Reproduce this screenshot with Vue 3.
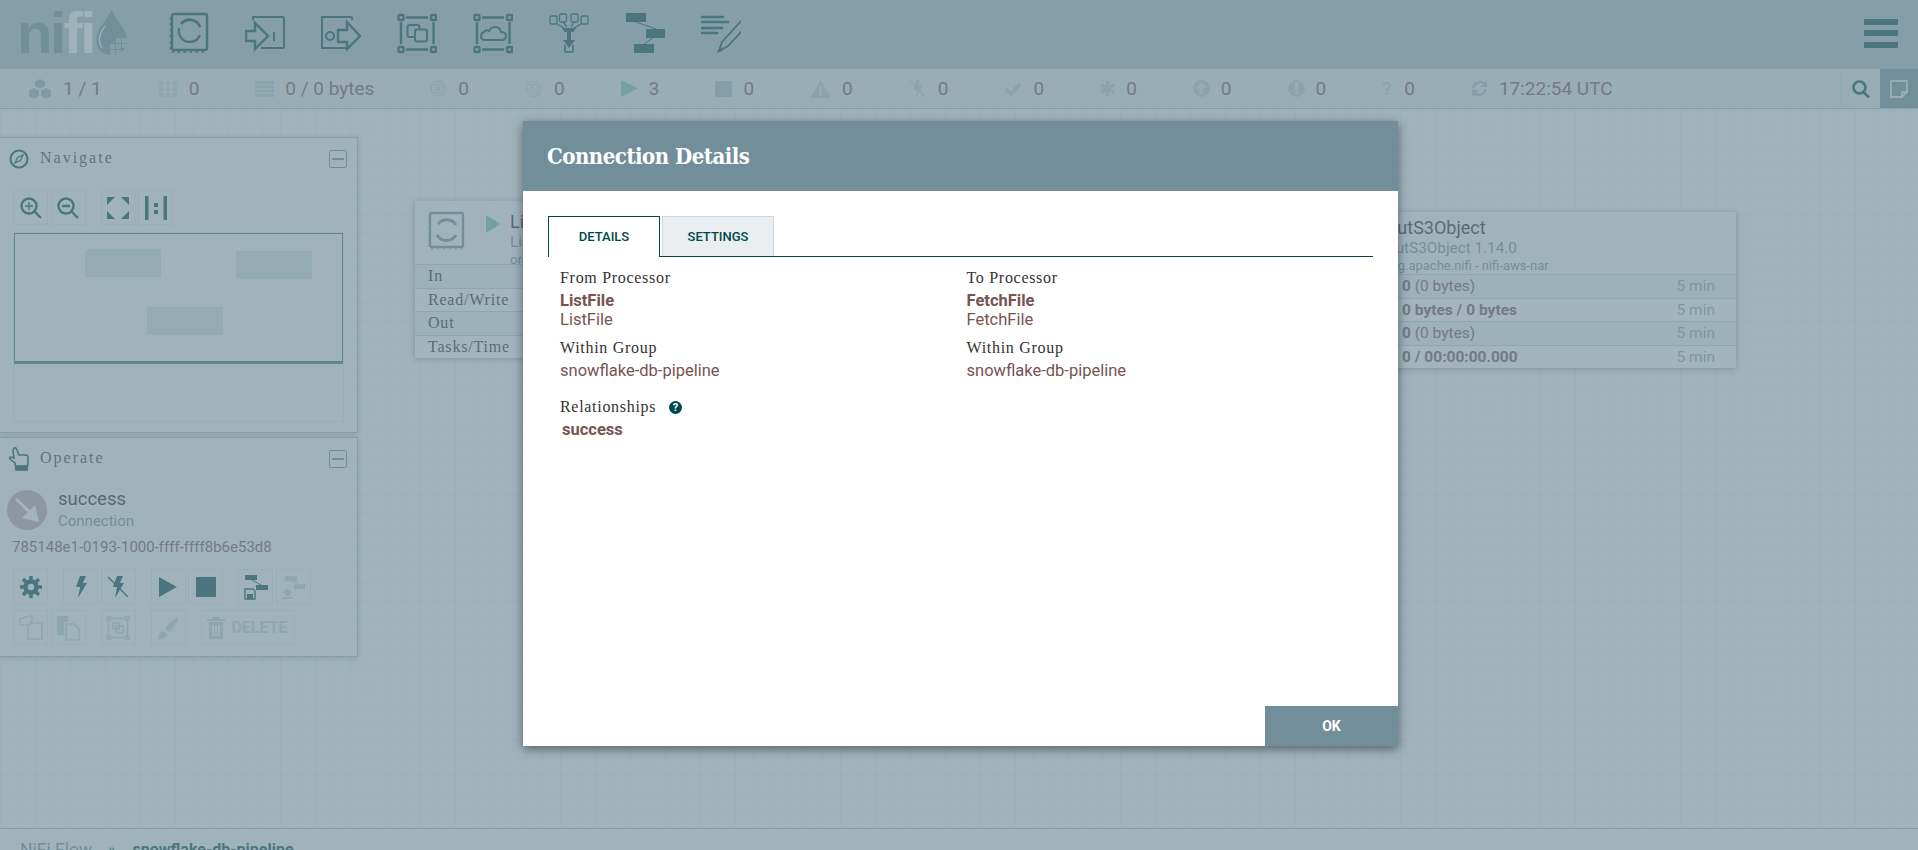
<script setup>
const rows = ["In", "Read/Write", "Out", "Tasks/Time"];

const putRows = [
	{ strong: "0", rest: " (0 bytes)" },
	{ strong: "0 bytes / 0 bytes", rest: "" },
	{ strong: "0", rest: " (0 bytes)" },
	{ strong: "0 / 00:00:00.000", rest: "" },
];

const details = [
	{ label: "From Processor", name: "ListFile", type: "ListFile" },
	{ label: "To Processor", name: "FetchFile", type: "FetchFile" },
];
</script>

<template>
	<div class="page">
		<header class="topbar">
			<div class="logo">
				<span class="logo-text">ni<em>fi</em></span>
				<svg class="drop" width="32" height="47" viewBox="0 0 32 47">
					<path d="M15.500 0C18 10 31 19 31 31C31 40 24 46 15.500 46C7 46 0 40 0 31C0 19 13 10 15.500 0Z" fill="#728e9b" />
					<path d="M9 17C3 25 1 32 6 39" fill="none" stroke="#fff" stroke-width="1.2" />
					<g fill="#aabbc3">
						<rect x="20" y="29" width="5" height="5" /><rect x="26" y="29" width="5" height="5" />
						<rect x="14" y="35" width="5" height="5" /><rect x="20" y="35" width="5" height="5" /><rect x="26" y="35" width="5" height="4" />
						<rect x="14" y="41" width="5" height="5" /><rect x="20" y="41" width="5" height="4" />
					</g>
				</svg>
			</div>
			<nav class="tools">
				<svg width="40" height="44" viewBox="0 0 40 44" fill="none" stroke="#004849">
					<rect x="3" y="3" width="35" height="36" rx="2" stroke-width="2.4" />
					<path d="M1.500 6V41H38" stroke-width="1.400" stroke-dasharray="2.500 3.500" />
					<path d="M12 13A11 11 0 0 1 31 16" stroke-width="2.800" />
					<path d="M31 24A11 11 0 0 1 11 25A11 11 0 0 1 10 17" stroke-width="2.200" />
				</svg>
				<svg width="40" height="44" viewBox="0 0 40 44" fill="none" stroke="#004849" stroke-width="2">
					<path d="M8 9V6H38Q39 6 39 7V36Q39 37 38 37H16" />
					<path d="M1 20H10V12L23 25L10 38V30H1Z" stroke-width="2.400" />
					<path d="M29 21V30" />
				</svg>
				<svg width="40" height="44" viewBox="0 0 40 44" fill="none" stroke="#004849" stroke-width="2">
					<path d="M31 9V7Q31 6 30 6H1V37H26" />
					<path d="M17 19H26V11L39 25L26 38V31H17Z" stroke-width="2.400" />
					<circle cx="9" cy="25" r="4" />
				</svg>
				<svg width="40" height="44" viewBox="0 0 40 44" fill="none" stroke="#004849" stroke-width="2">
					<rect x="1.500" y="4" width="5" height="5" stroke-width="2.400" rx="1" /><rect x="34" y="4" width="5" height="5" stroke-width="2.400" rx="1" />
					<rect x="1.500" y="36" width="5" height="5" stroke-width="2.400" rx="1" /><rect x="34" y="36" width="5" height="5" stroke-width="2.400" rx="1" />
					<path d="M9 6.500H31M9 38.500H31M4 11V33M36.500 11V33" stroke-width="2.400" />
					<rect x="10.500" y="14" width="12" height="12" rx="2" />
					<rect x="18" y="18.500" width="12" height="12" rx="2" fill="#aabbc3" />
				</svg>
				<svg width="40" height="44" viewBox="0 0 40 44" fill="none" stroke="#004849" stroke-width="2">
					<rect x="1.500" y="4" width="5" height="5" stroke-width="2.400" rx="1" /><rect x="34" y="4" width="5" height="5" stroke-width="2.400" rx="1" />
					<rect x="1.500" y="36" width="5" height="5" stroke-width="2.400" rx="1" /><rect x="34" y="36" width="5" height="5" stroke-width="2.400" rx="1" />
					<path d="M9 6.500H31M9 38.500H31M4 11V33M36.500 11V33" stroke-width="2.400" />
					<path d="M12 29H28Q33 29 33 25Q33 21 28 21Q27 16 22 16Q18 16 16 20Q13 18 11 21Q8 22 8 25Q8 29 12 29Z" />
				</svg>
				<svg width="40" height="44" viewBox="0 0 40 44" fill="none" stroke="#004849">
					<g stroke-width="1.300">
						<rect x="1" y="5" width="7" height="8" rx="1.500" /><rect x="10.500" y="3" width="7" height="8" rx="1.500" />
						<rect x="22" y="3" width="7" height="8" rx="1.500" /><rect x="32" y="5" width="7" height="8" rx="1.500" />
						<path d="M8 13L15 17M14 11L18 16M25 11L22 16M32 13L25 17" />
					</g>
					<path d="M13 17H27L24.500 21H15.500Z" fill="#004849" stroke="none" />
					<path d="M20 21V30" stroke-width="4" />
					<path d="M14 29H26L20 37Z" fill="#004849" stroke="none" />
					<path d="M16 34V40Q16 41 17 41H23Q24 41 24 40V34" stroke-width="1.600" />
				</svg>
				<svg width="40" height="44" viewBox="0 0 40 44" fill="#004849">
					<rect x="1" y="2" width="20" height="9" /><rect x="21" y="18" width="19" height="9" /><rect x="9" y="33" width="20" height="9" />
					<path d="M11 11L31 18M28 27L19 33" stroke="#004849" fill="none" />
				</svg>
				<svg width="40" height="44" viewBox="0 0 40 44" fill="none" stroke="#004849">
					<path d="M1 6H22M1 11H27M1 17H21M1 22H16" stroke-width="2.600" stroke-linecap="round" />
					<path d="M41 9L21 31L18 40L27 35L41 20" stroke-width="1.800" />
					<path d="M19 36L17 41L22 39Z" fill="#004849" />
				</svg>
			</nav>
			<div class="hamburger"><i></i><i></i><i></i></div>
		</header>

		<div class="statusbar">
			<div class="stats">
				<div class="stat">
					<svg width="24" height="20" viewBox="0 0 24 20" fill="#9db0ba">
						<path d="M12 0L17 2.500V7L12 9.500L7 7V2.500Z" /><path d="M6 9L11 11.500V17L6 20L1 17V11.500Z" /><path d="M18 9L23 11.500V17L18 20L13 17V11.500Z" />
					</svg>
					<span>1 / 1</span>
				</div>
				<div class="stat">
					<svg width="20" height="18" viewBox="0 0 20 18" fill="#c5d2d8">
						<ellipse cx="3.500" cy="3" rx="2.500" ry="2.600" /><ellipse cx="10" cy="3" rx="2.500" ry="2.600" /><ellipse cx="16.500" cy="3" rx="2.500" ry="2.600" />
						<ellipse cx="3.500" cy="9" rx="2.500" ry="2.600" /><ellipse cx="10" cy="9" rx="2.500" ry="2.600" /><ellipse cx="16.500" cy="9" rx="2.500" ry="2.600" />
						<ellipse cx="3.500" cy="15" rx="2.500" ry="2.600" /><ellipse cx="10" cy="15" rx="2.500" ry="2.600" /><ellipse cx="16.500" cy="15" rx="2.500" ry="2.600" />
					</svg>
					<span>0</span>
				</div>
				<div class="stat">
					<svg width="19" height="16" viewBox="0 0 19 16" fill="#bdcbd1">
						<rect width="19" height="3" /><rect y="4.300" width="19" height="3" /><rect y="8.600" width="19" height="3" /><rect y="13" width="19" height="3" />
					</svg>
					<span>0 / 0 bytes</span>
				</div>
				<div class="stat">
					<svg width="17" height="17" viewBox="0 0 17 17" fill="none" stroke="#bdcbd1" stroke-width="1.500">
						<circle cx="8.500" cy="8.500" r="7.500" /><circle cx="8.500" cy="8.500" r="4.500" /><circle cx="8.500" cy="8.500" r="1.500" fill="#bdcbd1" />
					</svg>
					<span>0</span>
				</div>
				<div class="stat">
					<svg width="18" height="18" viewBox="0 0 18 18" fill="none" stroke="#c5d2d8" stroke-width="1.500">
						<circle cx="9" cy="9" r="7.500" /><circle cx="9" cy="9" r="4.500" /><path d="M2 1L16 17" />
					</svg>
					<span>0</span>
				</div>
				<div class="stat">
					<svg width="17" height="17" viewBox="0 0 17 17"><path d="M0 0L17 8.500L0 17Z" fill="#7dc7a0" /></svg>
					<span>3</span>
				</div>
				<div class="stat">
					<svg width="17" height="16" viewBox="0 0 17 16"><rect width="17" height="16" fill="#aabbc3" /></svg>
					<span>0</span>
				</div>
				<div class="stat">
					<svg width="21" height="18" viewBox="0 0 21 18">
						<path d="M10.500 0L21 18H0Z" fill="#bdcbd1" /><path d="M10.500 6V12M10.500 13.500V16" stroke="#e3e8eb" stroke-width="2" />
					</svg>
					<span>0</span>
				</div>
				<div class="stat">
					<svg width="18" height="18" viewBox="0 0 18 18">
						<path d="M7 0H11L9.500 6H13L7 18L8 10H4.500Z" fill="#bdcbd1" /><path d="M2 1L16 17" stroke="#bdcbd1" stroke-width="1.400" />
					</svg>
					<span>0</span>
				</div>
				<div class="stat">
					<svg width="18" height="14" viewBox="0 0 18 14" fill="none"><path d="M2 7L7 12L16 2" stroke="#bdcbd1" stroke-width="4" /></svg>
					<span>0</span>
				</div>
				<div class="stat">
					<svg width="15" height="15" viewBox="0 0 15 15" fill="none" stroke="#bdcbd1" stroke-width="3.500">
						<path d="M7.500 0V15M1 3.500L14 11.500M14 3.500L1 11.500" />
					</svg>
					<span>0</span>
				</div>
				<div class="stat">
					<svg width="17" height="17" viewBox="0 0 17 17">
						<circle cx="8.500" cy="8.500" r="8.500" fill="#bdcbd1" /><path d="M8.500 14V5M4.500 8L8.500 4L12.500 8" stroke="#e3e8eb" stroke-width="2" fill="none" />
					</svg>
					<span>0</span>
				</div>
				<div class="stat">
					<svg width="17" height="17" viewBox="0 0 17 17">
						<circle cx="8.500" cy="8.500" r="8.500" fill="#bdcbd1" /><path d="M8.500 3V10M8.500 11.500V14" stroke="#e3e8eb" stroke-width="3" />
					</svg>
					<span>0</span>
				</div>
				<div class="stat">
					<b class="qmark">?</b>
					<span>0</span>
				</div>
				<div class="stat">
					<svg width="17" height="17" viewBox="0 0 17 17" fill="none" stroke="#aabbc3" stroke-width="2.500">
						<path d="M2 8C3 3 9 0 14 4M15 9C14 14 8 17 3 13" />
						<path d="M16 0V7H9ZM1 17V10H8Z" fill="#aabbc3" stroke="none" />
					</svg>
					<span>17:22:54 UTC</span>
				</div>
			</div>
			<div class="search-btn">
				<svg width="18" height="18" viewBox="0 0 18 18" fill="none" stroke="#004849" stroke-width="2.600">
					<circle cx="7.500" cy="7.500" r="6" /><path d="M11.500 12L17 17.500" />
				</svg>
			</div>
			<div class="note-btn">
				<svg width="18" height="18" viewBox="0 0 18 18" fill="none" stroke="#fff" stroke-width="1.500">
					<path d="M1 1H17V12L12 17H1ZM17 12H12V17" />
				</svg>
			</div>
		</div>

		<main class="canvas">
			<div class="node list-node">
				<div class="node-head">
					<svg width="38" height="40" viewBox="0 0 38 40" fill="none" stroke="#728e9b">
						<rect x="2" y="2" width="33" height="34" rx="2" stroke-width="2.400" />
						<path d="M1 4V38H36" stroke-dasharray="2 4" />
						<path d="M10 13A11 11 0 0 1 28 14M28 24A11 11 0 0 1 9 24" stroke-width="3" />
					</svg>
					<svg class="node-play" width="15" height="18" viewBox="0 0 15 18"><path d="M0 0L15 9L0 18Z" fill="#7dc7a0" /></svg>
					<div>
						<div class="node-name">ListFile</div>
						<div class="node-type">ListFile 1.14.0</div>
						<div class="node-bundle">org.apache.nifi - nifi-standard-nar</div>
					</div>
				</div>
				<div v-for="row in rows" :key="row" class="node-row">
					<span class="row-label">{{ row }}</span>
				</div>
			</div>

			<div class="node put-node">
				<div class="node-head put-head">
					<div>
						<div class="node-name">PutS3Object</div>
						<div class="node-type">PutS3Object 1.14.0</div>
						<div class="node-bundle">org.apache.nifi - nifi-aws-nar</div>
					</div>
				</div>
				<div v-for="(row, i) in putRows" :key="i" class="node-row put-row">
					<span class="row-value"><b>{{ row.strong }}</b>{{ row.rest }}</span>
					<span class="row-time">5 min</span>
				</div>
			</div>

			<aside class="palettes">
				<section class="panel nav-panel">
					<div class="panel-title">
						<svg width="20" height="20" viewBox="0 0 20 20" fill="none" stroke="#004849">
							<circle cx="10" cy="10" r="8.500" stroke-width="2.200" />
							<path d="M14 6L11.500 11.500L6 14L8.500 8.500Z" stroke-width="1.300" />
						</svg>
						<h2>Navigate</h2>
						<span class="collapse"></span>
					</div>
					<div class="btn-row">
						<button class="tool">
							<svg width="22" height="22" viewBox="0 0 22 22" fill="none" stroke="#004849" stroke-width="2.400">
								<circle cx="9" cy="9" r="7.500" /><path d="M14.500 14.500L21 21" /><path d="M5 9H13M9 5V13" stroke-width="1.400" />
							</svg>
						</button>
						<button class="tool">
							<svg width="22" height="22" viewBox="0 0 22 22" fill="none" stroke="#004849" stroke-width="2.400">
								<circle cx="9" cy="9" r="7.500" /><path d="M14.500 14.500L21 21M5 9H13" />
							</svg>
						</button>
						<button class="tool sep">
							<svg width="24" height="24" viewBox="0 0 24 24" fill="#004849">
								<path d="M1 1H9L1 9ZM23 1V9L15 1ZM1 23V15L9 23ZM23 23H15L23 15Z" />
							</svg>
						</button>
						<button class="tool">
							<svg width="24" height="24" viewBox="0 0 24 24" fill="#004849">
								<rect x="1" width="3.500" height="24" /><rect x="19.500" width="3.500" height="24" />
								<rect x="10" y="7" width="4" height="4" /><rect x="10" y="14" width="4" height="4" />
							</svg>
						</button>
					</div>
					<div class="birdseye-wrap">
						<div class="birdseye">
							<i class="mini m1"></i><i class="mini m2"></i><i class="mini m3"></i>
						</div>
					</div>
				</section>

				<section class="panel op-panel">
					<div class="panel-title">
						<svg width="20" height="24" viewBox="0 0 20 24" fill="none" stroke="#004849" stroke-width="1.600">
							<path d="M5 1Q7 0 8 3L10 8H17Q19 8 19 11V16L18 22H7L6 16L1 12Q0 10 2 10L5 11L4 4Q4 2 5 1Z" />
							<rect x="7" y="19" width="11" height="4" fill="#004849" />
						</svg>
						<h2>Operate</h2>
						<span class="collapse"></span>
					</div>
					<div class="selection">
						<div class="conn-icon">
							<svg width="28" height="28" viewBox="0 0 28 28" fill="none">
								<path d="M3 3L20 19" stroke="#fff" stroke-width="3" /><path d="M26 26L9 22L22 9Z" fill="#fff" />
							</svg>
						</div>
						<div>
							<div class="sel-name">success</div>
							<div class="sel-type">Connection</div>
						</div>
					</div>
					<div class="sel-id">785148e1-0193-1000-ffff-ffff8b6e53d8</div>
					<div class="btn-row">
						<button class="tool">
							<svg width="22" height="22" viewBox="0 0 22 22" fill="none" stroke="#004849">
								<circle cx="11" cy="11" r="5.500" stroke-width="4.500" />
								<path d="M11 0V5M11 17V22M0 11H5M17 11H22M3 3L6.500 6.500M15.500 15.500L19 19M3 19L6.500 15.500M15.500 6.500L19 3" stroke-width="3.500" />
							</svg>
						</button>
						<button class="tool sep">
							<svg width="14" height="24" viewBox="0 0 14 24"><path d="M6 1H12L9 8H13L4 23L6 12H2Z" fill="#004849" /></svg>
						</button>
						<button class="tool">
							<svg width="22" height="24" viewBox="0 0 22 24">
								<path d="M10 1H16L13 8H17L8 23L10 12H6Z" fill="#004849" /><path d="M1 2L21 22" stroke="#004849" stroke-width="1.500" />
							</svg>
						</button>
						<button class="tool sep">
							<svg width="20" height="22" viewBox="0 0 20 22"><path d="M1 1L19 11L1 21Z" fill="#004849" /></svg>
						</button>
						<button class="tool">
							<svg width="20" height="20" viewBox="0 0 20 20"><rect width="20" height="20" fill="#004849" /></svg>
						</button>
						<button class="tool sep">
							<svg width="24" height="26" viewBox="0 0 24 26" fill="#004849">
								<rect x="1" y="1" width="12" height="5" /><rect x="12" y="11" width="12" height="5" />
								<path d="M8 6L17 11" stroke="#004849" />
								<path d="M1 15H9L11 17V25H1Z" fill="none" stroke="#004849" stroke-width="1.400" /><rect x="3" y="20" width="6" height="5" />
							</svg>
						</button>
						<button class="tool">
							<svg width="24" height="26" viewBox="0 0 24 26" fill="#c5d2d8">
								<rect x="4" y="2" width="12" height="5" /><rect x="13" y="10" width="11" height="5" />
								<path d="M10 7L18 10" stroke="#c5d2d8" />
								<path d="M5 14L11 19H8V22H3V19H0ZM0 23H10V25H0Z" transform="translate(1 0)" />
							</svg>
						</button>
					</div>
					<div class="btn-row">
						<button class="tool off">
							<svg width="24" height="26" viewBox="0 0 24 26" fill="none" stroke="#c5d2d8" stroke-width="1.600">
								<path d="M9 1H13V6L9 10H1V4Z" /><path d="M13 8H23V24H9V12Z" />
							</svg>
						</button>
						<button class="tool off">
							<svg width="24" height="26" viewBox="0 0 24 26" fill="#c5d2d8">
								<path d="M1 1H12V7H8V20H1Z" /><path d="M10 9H18L23 14V25H10Z" fill="none" stroke="#c5d2d8" stroke-width="1.600" />
							</svg>
						</button>
						<button class="tool off sep">
							<svg width="24" height="26" viewBox="0 0 24 26" fill="none" stroke="#c5d2d8" stroke-width="1.600">
								<rect x="1" y="2" width="3" height="3" /><rect x="20" y="2" width="3" height="3" />
								<rect x="1" y="21" width="3" height="3" /><rect x="20" y="21" width="3" height="3" />
								<path d="M5 3.500H19M5 22.500H19M2.500 6V20M21.500 6V20" />
								<rect x="7" y="8" width="6" height="6" /><rect x="10" y="11" width="7" height="7" />
							</svg>
						</button>
						<button class="tool off sep">
							<svg width="24" height="24" viewBox="0 0 24 24" fill="#c5d2d8">
								<path d="M23 1Q14 4 9 13L12 16Q20 11 23 1ZM7 15Q3 16 3 20Q3 22 1 23Q7 24 10 21Q11 19 10 17Z" />
							</svg>
						</button>
						<button class="tool off sep delete">
							<svg width="18" height="22" viewBox="0 0 18 22" fill="#c5d2d8">
								<path d="M6 0H12V2H18V4H0V2H6ZM2 5H16V22H2ZM5 8V19H7V8ZM8 8V19H10V8ZM11 8V19H13V8Z" fill-rule="evenodd" />
							</svg>
							<span>DELETE</span>
						</button>
					</div>
				</section>
			</aside>
		</main>

		<footer class="breadcrumbs">
			<span class="crumb">NiFi Flow</span>
			<span class="crumb-sep">»</span>
			<b class="crumb-current">snowflake-db-pipeline</b>
		</footer>

		<div class="overlay">
			<div class="dialog">
				<h1 class="dialog-head">Connection Details</h1>
				<div class="dialog-body">
					<div class="tabs">
						<div class="tab active">DETAILS</div>
						<div class="tab">SETTINGS</div>
					</div>
					<div class="columns">
						<div v-for="col in details" :key="col.label" class="column">
							<div class="label">{{ col.label }}</div>
							<div class="value strong">{{ col.name }}</div>
							<div class="value">{{ col.type }}</div>
							<div class="label group-label">Within Group</div>
							<div class="value">snowflake-db-pipeline</div>
						</div>
					</div>
					<div class="relations">
						<div class="label">
							Relationships
							<span class="help">?</span>
						</div>
						<div class="value strong rel-value">success</div>
					</div>
				</div>
				<div class="dialog-foot">
					<button class="ok">OK</button>
				</div>
			</div>
		</div>
	</div>
</template>

<style>
html,
body {
	margin: 0;
	overflow: hidden;
}
</style>

<style scoped>
.page {
	position: relative;
	display: flex;
	flex-direction: column;
	height: 850px;
	overflow: hidden;
	font-family: Roboto, "Liberation Sans", sans-serif;
	background: #f9fafb;
}

.topbar {
	display: flex;
	align-items: center;
	flex-shrink: 0;
	height: 69px;
	background: #aabbc3;
}

.logo {
	display: flex;
	align-items: flex-start;
	width: 169px;
	height: 69px;
	padding-left: 17px;
	box-sizing: border-box;
}

.logo-text {
	width: 79px;
	font-family: "Liberation Sans", sans-serif;
	font-weight: 700;
	font-size: 58px;
	line-height: 60px;
	letter-spacing: -2.500px;
	color: #728e9b;
	margin-top: 3px;
}

.logo-text em {
	font-style: normal;
	color: #f9fafb;
}

.drop {
	margin-top: 9px;
}

.tools {
	display: flex;
	gap: 36px;
	margin-bottom: 3px;
}

.hamburger {
	display: flex;
	flex-direction: column;
	gap: 5.500px;
	margin: 0 20px 3px auto;
}

.hamburger i {
	display: block;
	width: 34px;
	height: 6px;
	border-radius: 1px;
	background: #004849;
}

.statusbar {
	display: flex;
	align-items: center;
	flex-shrink: 0;
	height: 40px;
	background: #e3e8eb;
	border-bottom: 1px solid #aabbc3;
	box-sizing: border-box;
}

.stats {
	display: flex;
	align-items: center;
	gap: 56px;
	flex: 1;
	padding-left: 28px;
}

.stat {
	display: flex;
	align-items: center;
	gap: 11px;
	font-size: 19px;
	color: #775351;
}

.qmark {
	color: #bdcbd1;
	font-size: 19px;
	width: 11px;
}

.search-btn {
	display: flex;
	align-items: center;
	justify-content: center;
	width: 40px;
	height: 39px;
	border-left: 1px solid #d5dde1;
	box-sizing: border-box;
}

.note-btn {
	display: flex;
	align-items: center;
	justify-content: center;
	width: 38px;
	height: 39px;
	background: #728e9b;
}

.canvas {
	position: relative;
	flex-shrink: 0;
	height: 719px;
	background-color: #f9fafb;
	background-image:
		linear-gradient(rgba(0, 72, 73, 0.06) 1px, transparent 1px),
		linear-gradient(90deg, rgba(0, 72, 73, 0.06) 1px, transparent 1px);
	background-size: 17.500px 17.500px;
	background-position: 0 1px;
}

.node {
	position: absolute;
	width: 441px;
	background: #fff;
	box-shadow: 0 1px 6px rgba(0, 0, 0, 0.4);
}

.list-node {
	left: 415px;
	top: 92px;
}

.put-node {
	left: 1295px;
	top: 103px;
}

.node-head {
	display: flex;
	align-items: flex-start;
	height: 63px;
	padding: 10px 0 0 13px;
	box-sizing: border-box;
	background: #f9fafb;
}

.put-head {
	padding: 5px 0 0 91px;
	height: 62px;
}

.node-play {
	margin: 4px 9px 0 20px;
	flex-shrink: 0;
}

.node-name {
	font-size: 18px;
	line-height: 22px;
	color: #262626;
}

.node-type {
	font-size: 15.300px;
	line-height: 19px;
	color: #728e9b;
}

.node-bundle {
	font-size: 13px;
	line-height: 15px;
	color: #728e9b;
}

.node-row {
	display: flex;
	align-items: center;
	justify-content: space-between;
	height: 23.500px;
	padding: 0 21px 0 13px;
	border-top: 1px solid #c7d2d7;
	box-sizing: border-box;
	background: #fff;
}

.node-row:nth-child(even) {
	background: #f0f3f5;
}

.put-row {
	padding-left: 107px;
}

.row-label {
	font-family: "Liberation Serif", serif;
	font-size: 16px;
	color: #262626;
	letter-spacing: 0.800px;
}

.row-value {
	font-size: 15.500px;
	color: #775351;
}

.row-time {
	font-size: 15.500px;
	color: #8fa5af;
}

.palettes {
	position: absolute;
	left: 0;
	top: 28px;
	display: flex;
	flex-direction: column;
	gap: 4px;
	width: 358px;
}

.panel {
	box-sizing: border-box;
	background: #f9fafb;
	border: 1px solid #aabbc3;
	border-left: 0;
	box-shadow: 0 1px 6px rgba(0, 0, 0, 0.25);
}

.nav-panel {
	height: 296px;
}

.op-panel {
	height: 220px;
}

.panel-title {
	display: flex;
	align-items: center;
	height: 41px;
	padding: 0 10px 0 9px;
}

.panel-title h2 {
	margin: -2px 0 0 11px;
	flex: 1;
	font-family: "Liberation Serif", serif;
	font-weight: 400;
	font-size: 16px;
	letter-spacing: 2px;
	color: #3c3c3c;
}

.collapse {
	position: relative;
	width: 16px;
	height: 16px;
	border: 1px solid #728e9b;
	border-radius: 2px;
}

.collapse::after {
	content: "";
	position: absolute;
	left: 2px;
	right: 2px;
	top: 7px;
	height: 2px;
	background: #728e9b;
}

.btn-row {
	display: flex;
	gap: 2.500px;
	padding-left: 13px;
	margin-top: 11px;
}

.op-panel .btn-row {
	margin-top: 6px;
}

.tool {
	display: flex;
	align-items: center;
	justify-content: center;
	width: 35px;
	height: 35px;
	padding: 0;
	background: transparent;
	border: 1px solid #e3e8eb;
}

.sep {
	margin-left: 12.500px;
}

.delete {
	width: 94px;
	gap: 6px;
	font-family: Roboto, sans-serif;
	font-weight: 700;
	font-size: 16px;
	color: #c5d2d8;
}

.birdseye-wrap {
	height: 188px;
	margin: 7px 13px 0;
	border: 1px solid #e3e8eb;
}

.birdseye {
	position: relative;
	height: 131px;
	border: 1px solid rgba(0, 72, 73, 0.75);
	border-bottom-width: 3px;
	box-sizing: border-box;
}

.mini {
	position: absolute;
	width: 76px;
	height: 28px;
	background: #d8e0e4;
}

.m1 {
	left: 70px;
	top: 15px;
}

.m2 {
	left: 221px;
	top: 17px;
}

.m3 {
	left: 132px;
	top: 73px;
}

.selection {
	display: flex;
	align-items: center;
	gap: 11px;
	padding: 9px 0 0 7px;
}

.conn-icon {
	display: flex;
	align-items: center;
	justify-content: center;
	width: 40px;
	height: 40px;
	border-radius: 50%;
	background: #c0a8ac;
}

.sel-name {
	font-size: 18.500px;
	line-height: 23px;
	color: #262626;
}

.sel-type {
	font-size: 15px;
	line-height: 20px;
	color: #728e9b;
}

.sel-id {
	padding: 8px 0 0 12px;
	font-size: 15px;
	line-height: 17px;
	color: #775351;
}

.sel-id + .btn-row {
	margin-top: 13px;
}

.breadcrumbs {
	display: flex;
	align-items: flex-start;
	gap: 16px;
	flex: 1;
	padding: 12px 0 0 20px;
	border-top: 1px solid #aabbc3;
	box-sizing: border-box;
	font-size: 16px;
	line-height: 18px;
	background: #f9fafb;
	color: #728e9b;
}

.crumb {
	font-size: 17.500px;
}

.crumb-sep {
	color: #004849;
}

.crumb-current {
	margin-left: 1px;
	color: #004849;
}

.overlay {
	position: absolute;
	inset: 0;
	background: rgba(114, 142, 155, 0.66);
}

.dialog {
	position: absolute;
	left: 523px;
	top: 121px;
	display: flex;
	flex-direction: column;
	width: 875px;
	height: 625px;
	background: #fff;
	box-shadow: 0 3px 10px rgba(0, 0, 0, 0.45);
}

.dialog-head {
	margin: 0;
	height: 70px;
	padding-left: 24px;
	flex-shrink: 0;
	box-sizing: border-box;
	background: #728e9b;
	color: #fff;
	font-family: "DejaVu Serif", serif;
	font-stretch: condensed;
	font-weight: 700;
	font-size: 22px;
	letter-spacing: -0.500px;
	line-height: 70px;
}

.dialog-body {
	flex: 1;
	padding: 25px 25px 0 25px;
}

.tabs {
	display: flex;
	gap: 2px;
	height: 41px;
	border-bottom: 1px solid #004849;
	box-sizing: border-box;
}

.tab {
	width: 112px;
	height: 40px;
	line-height: 40px;
	text-align: center;
	box-sizing: border-box;
	font-size: 13px;
	font-weight: 500;
	color: #004849;
	background: #eaeef0;
	border: 1px solid #cfd8dc;
	border-bottom: 0;
}

.tab.active {
	height: 41px;
	background: #fff;
	border-color: #004849;
}

.columns {
	display: flex;
	padding: 11px 0 0 12px;
}

.column {
	width: 410px;
}

.label {
	font-family: "Liberation Serif", serif;
	font-size: 16px;
	line-height: 20px;
	letter-spacing: 0.700px;
	color: #333;
}

.value {
	font-size: 16.500px;
	line-height: 19px;
	color: #775351;
}

.value.strong {
	font-weight: 700;
	margin-top: 3px;
}

.group-label {
	margin-top: 9px;
}

.group-label + .value {
	margin-top: 3px;
}

.relations {
	padding: 17px 0 0 12px;
}

.help {
	display: inline-block;
	width: 13px;
	height: 13px;
	margin-left: 8px;
	border-radius: 50%;
	background: #004849;
	color: #fff;
	font-family: Roboto, sans-serif;
	font-weight: 700;
	font-size: 11px;
	line-height: 13px;
	text-align: center;
	vertical-align: 1px;
	letter-spacing: 0;
}

.rel-value {
	margin: 8px 0 0 2px;
}

.dialog-foot {
	display: flex;
	justify-content: flex-end;
	height: 40px;
	flex-shrink: 0;
}

.ok {
	width: 133px;
	height: 40px;
	border: 0;
	background: #728e9b;
	color: #fff;
	font-family: Roboto, sans-serif;
	font-weight: 700;
	font-size: 14px;
}
</style>
